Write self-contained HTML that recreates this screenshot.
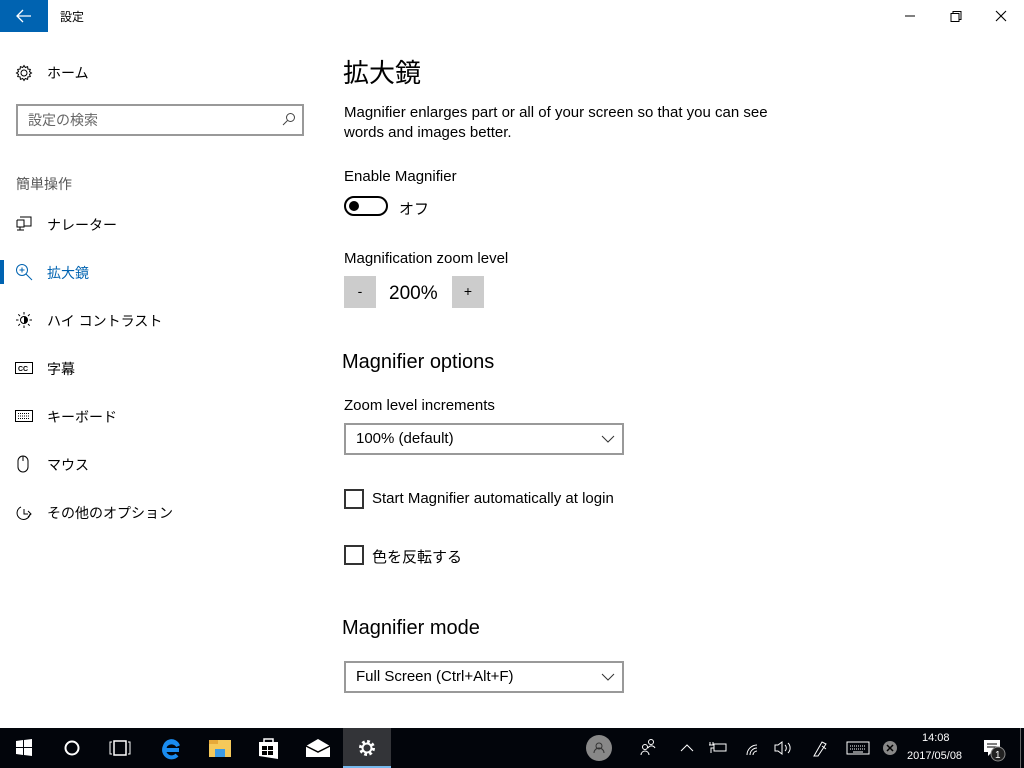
<!DOCTYPE html>
<html><head><meta charset="utf-8"><style>
*{margin:0;padding:0;box-sizing:border-box}
body{width:1024px;height:768px;overflow:hidden;background:#fff;font-family:"Liberation Sans","Noto Sans CJK JP",sans-serif;color:#000;position:relative}
.a{position:absolute;white-space:nowrap}
.t15{font-size:15px}
.nav{font-size:14px;color:#000}
.ic{position:absolute}
.box{position:absolute;border:2px solid #999;background:#fff}
.chk{position:absolute;width:20px;height:20px;border:2px solid #333}
.btn{position:absolute;width:32px;height:32px;background:#ccc;text-align:center;line-height:30px;font-size:14px}
.tb{position:absolute;left:0;top:728px;width:1024px;height:40px;background:#02050b}
</style></head><body>
<div class="a" style="left:0;top:0;width:48px;height:32px;background:#0063b1"></div>
<svg class="ic" style="left:16px;top:9px" width="16" height="14"><path d="M1 7H15M7 1L1 7L7 13" stroke="#fff" stroke-width="1.3" fill="none"/></svg>
<div class="a" style="left:60px;top:8px;font-size:12px">設定</div>
<svg class="ic" style="left:900px;top:10px" width="110" height="12"><path d="M5 6H15" stroke="#000"/><path d="M51 3.5H59V11.5H51ZM53 3.5V1.5H61V9.5H59" stroke="#000" fill="none"/><path d="M96 1L106 11M106 1L96 11" stroke="#000" stroke-width="1.1"/></svg>

<svg class="ic" style="left:15px;top:64px" width="18" height="18" viewBox="0 0 18 18"><circle cx="9" cy="9" r="3" fill="none" stroke="#000"/><path d="M9 1.5l1.3 2 2.3-.8.3 2.4 2.4.3-.8 2.3 2 1.3-2 1.3.8 2.3-2.4.3-.3 2.4-2.3-.8L9 16.5l-1.3-2-2.3.8-.3-2.4-2.4-.3.8-2.3L1.5 9l2-1.3-.8-2.3 2.4-.3.3-2.4 2.3.8z" fill="none" stroke="#000" stroke-width="1"/></svg>
<div class="a nav" style="left:47px;top:63px">ホーム</div>
<div class="box" style="left:16px;top:104px;width:288px;height:32px"></div>
<div class="a" style="left:28px;top:110px;font-size:14px;color:#666">設定の検索</div>
<svg class="ic" style="left:282px;top:112px" width="14" height="14"><circle cx="8.5" cy="5.5" r="4" fill="none" stroke="#444"/><path d="M5.5 8.5L1 13" stroke="#444"/></svg>
<div class="a" style="left:16px;top:174px;font-size:14px;color:#555">簡単操作</div>

<svg class="ic" style="left:15px;top:215px" width="18" height="18"><path d="M5 2H16V11H9M2 5H9V12H5V15M5 12V15M2 15H9" fill="none" stroke="#000"/><path d="M2 5V12H5" fill="none" stroke="#000"/></svg>
<div class="a nav" style="left:47px;top:215px">ナレーター</div>
<div class="a" style="left:0;top:260px;width:4px;height:24px;background:#0063b1"></div>
<svg class="ic" style="left:15px;top:263px" width="18" height="18"><circle cx="7" cy="7" r="5.5" fill="none" stroke="#0063b1"/><path d="M11 11L17 17M4.5 7H9.5M7 4.5V9.5" stroke="#0063b1"/></svg>
<div class="a nav" style="left:47px;top:263px;color:#0063b1">拡大鏡</div>
<svg class="ic" style="left:15px;top:311px" width="18" height="18"><circle cx="9" cy="9" r="3.5" fill="none" stroke="#000"/><path d="M9 9V5.5A3.5 3.5 0 0 1 9 12.5Z" fill="#000"/><path d="M9 1V3.5M9 14.5V17M1 9H3.5M14.5 9H17M3.3 3.3L5 5M13 13L14.7 14.7M3.3 14.7L5 13M13 5L14.7 3.3" stroke="#000"/></svg>
<div class="a nav" style="left:47px;top:311px">ハイ コントラスト</div>
<svg class="ic" style="left:15px;top:362px" width="18" height="12"><rect x="0.5" y="0.5" width="17" height="11" fill="none" stroke="#000"/><text x="3" y="9" font-size="7" font-family="Liberation Sans" font-weight="bold">CC</text></svg>
<div class="a nav" style="left:47px;top:359px">字幕</div>
<svg class="ic" style="left:15px;top:410px" width="18" height="12"><rect x="0.5" y="0.5" width="17" height="11" fill="none" stroke="#000"/><path d="M3 3.5H15M3 6H15M3 8.5H15" stroke="#000" stroke-dasharray="1 1"/></svg>
<div class="a nav" style="left:47px;top:407px">キーボード</div>
<svg class="ic" style="left:17px;top:455px" width="12" height="18"><rect x="1" y="1" width="10" height="16" rx="5" fill="none" stroke="#000"/><path d="M6 1V6" stroke="#000"/></svg>
<div class="a nav" style="left:47px;top:455px">マウス</div>
<svg class="ic" style="left:15px;top:504px" width="18" height="18"><path d="M6 3A6.5 6.5 0 1 0 15 10M9 5V10H13M13 7L16 10L13 13" fill="none" stroke="#000"/></svg>
<div class="a nav" style="left:47px;top:503px">その他のオプション</div>

<div class="a" style="left:343px;top:53px;font-size:26px">拡大鏡</div>
<div class="a t15" style="left:344px;top:103px;line-height:20px">Magnifier enlarges part or all of your screen so that you can see<br>words and images better.</div>
<div class="a t15" style="left:344px;top:168px">Enable Magnifier</div>
<div class="a" style="left:344px;top:196px;width:44px;height:20px;border:2px solid #000;border-radius:10px"></div>
<div class="a" style="left:349px;top:201px;width:10px;height:10px;border-radius:5px;background:#000"></div>
<div class="a t15" style="left:399px;top:198px">オフ</div>
<div class="a t15" style="left:344px;top:250px">Magnification zoom level</div>
<div class="btn" style="left:344px;top:276px">-</div>
<div class="a" style="left:389px;top:283px;font-size:19px">200%</div>
<div class="btn" style="left:452px;top:276px">+</div>
<div class="a" style="left:342px;top:351px;font-size:20px">Magnifier options</div>
<div class="a t15" style="left:344px;top:397px">Zoom level increments</div>
<div class="box" style="left:344px;top:423px;width:280px;height:32px"></div>
<div class="a t15" style="left:356px;top:430px">100% (default)</div>
<svg class="ic" style="left:601px;top:434px" width="14" height="10"><path d="M1 2L7 8L13 2" fill="none" stroke="#333"/></svg>
<div class="chk" style="left:344px;top:489px"></div>
<div class="a t15" style="left:372px;top:490px">Start Magnifier automatically at login</div>
<div class="chk" style="left:344px;top:545px"></div>
<div class="a t15" style="left:372px;top:546px">色を反転する</div>
<div class="a" style="left:342px;top:617px;font-size:20px">Magnifier mode</div>
<div class="box" style="left:344px;top:661px;width:280px;height:32px"></div>
<div class="a t15" style="left:356px;top:668px">Full Screen (Ctrl+Alt+F)</div>
<svg class="ic" style="left:601px;top:672px" width="14" height="10"><path d="M1 2L7 8L13 2" fill="none" stroke="#333"/></svg>

<div class="tb">
<div class="a" style="left:343px;top:0;width:48px;height:40px;background:#333438"></div>
<div class="a" style="left:343px;top:38px;width:48px;height:2px;background:#76b9ed"></div>
<svg class="ic" style="left:0;top:0" width="1024" height="40">
<path d="M16 13L23 12V19H16ZM24 12L32 11V19H24ZM16 20H23V27L16 26ZM24 20H32V28L24 27Z" fill="#fff"/>
<circle cx="72" cy="20" r="6.5" fill="none" stroke="#fff" stroke-width="2"/>
<path d="M112 14H110V26H112M128 14H130V26H128" fill="none" stroke="#fff"/><rect x="114" y="13" width="12" height="14" fill="none" stroke="#fff" stroke-width="1.5"/>
<path d="M179 22H165A6 6 0 0 1 178 18A7.5 7.5 0 1 0 177 27" fill="none" stroke="#1a8cf0" stroke-width="4"/>
<rect x="209" y="12" width="22" height="17" fill="#f5c95b"/><rect x="209" y="12" width="9" height="4" fill="#e6a93a"/><rect x="215" y="21" width="10" height="8" fill="#3b9be6"/>
<path d="M259 14H278V31L259 28Z" fill="#fff"/><path d="M264 14V11H273V14" fill="none" stroke="#fff" stroke-width="1.5"/><rect x="262" y="18" width="5" height="4" fill="#000"/><rect x="268" y="18" width="5" height="4" fill="#000"/><rect x="262" y="23" width="5" height="4" fill="#000"/><rect x="268" y="23" width="5" height="4" fill="#000"/>
<path d="M306 18L318 11L330 18V29H306Z" fill="#fff"/><path d="M306 18L318 24L330 18" fill="none" stroke="#000" stroke-width="1.5"/>
<circle cx="367" cy="20" r="6" fill="none" stroke="#fff" stroke-width="4" stroke-dasharray="2.5 2.2"/><circle cx="367" cy="20" r="4.5" fill="none" stroke="#fff" stroke-width="2"/>
<circle cx="599" cy="20" r="13" fill="#888"/><circle cx="599" cy="18" r="3" fill="none" stroke="#333"/><path d="M594 25A5 5 0 0 1 604 25" fill="none" stroke="#333"/>
<g fill="none" stroke="#fff"><circle cx="645" cy="19" r="2.5"/><path d="M641 27A4 4 0 0 1 649 27"/><circle cx="651" cy="14" r="2.5"/><path d="M648 20A4 4 0 0 1 655 20"/>
<path d="M681 23L687 17L693 23"/>
<rect x="714" y="16" width="12" height="7"/><path d="M710 14V17M713 14V17M709 17H714V20H711V25"/>
<path d="M747 27A10 10 0 0 1 757 17M750 27A7 7 0 0 1 757 20M753 27A4 4 0 0 1 757 23"/>
<path d="M775 17H778L782 14V26L778 23H775ZM785 17A4 4 0 0 1 785 23M788 15A7 7 0 0 1 788 25"/>
<path d="M814 28L822 14L826 16L818 28ZM822 18L826 21"/>
<rect x="847" y="14" width="22" height="12"/><path d="M850 18H866M850 21H866" stroke-dasharray="1 1"/><path d="M853 24H863"/>
</g>
<circle cx="890" cy="20" r="7" fill="#888"/><path d="M887 17L893 23M893 17L887 23" stroke="#000" stroke-width="1.5"/>
<path d="M984 12H1000V24H992L988 28V24H984Z" fill="#fff"/><path d="M987 16H997M987 19H997" stroke="#000"/><circle cx="998" cy="26" r="7" fill="#222" stroke="#888"/><text x="995" y="30" fill="#fff" font-size="10" font-family="Liberation Sans">1</text>
<rect x="1020" y="0" width="1" height="40" fill="#666"/>
</svg>
<div class="a" style="left:922px;top:4px;font-size:11px;color:#fff">14:08</div>
<div class="a" style="left:907px;top:22px;font-size:11px;color:#fff">2017/05/08</div>
</div>
</body></html>
